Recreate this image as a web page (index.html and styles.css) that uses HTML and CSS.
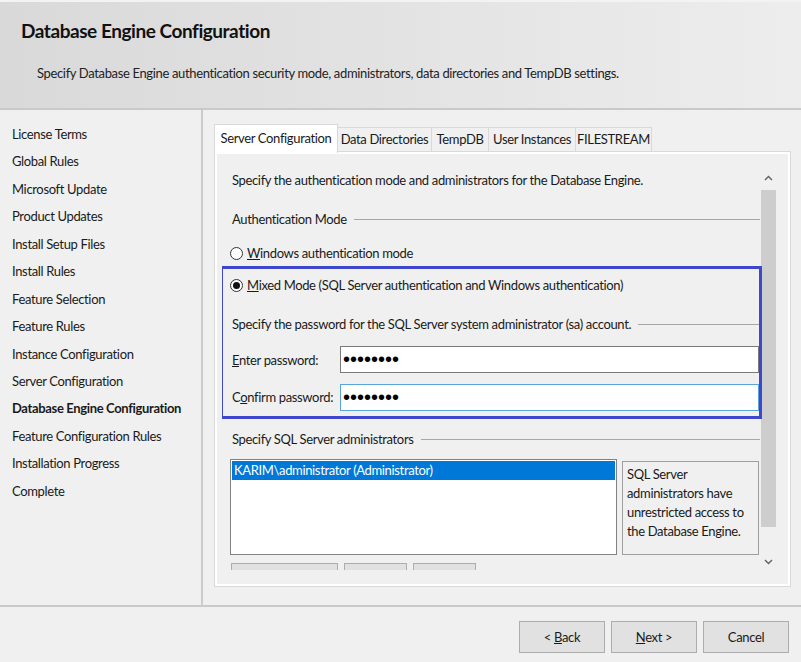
FILE: index.html
```html
<!DOCTYPE html>
<html lang="en">
<head>
<meta charset="utf-8">
<title>Database Engine Configuration</title>
<link rel="stylesheet" href="styles.css">
</head>
<body>
<div class="window">
  <header class="header">
    <h1 class="title">Database Engine Configuration</h1>
    <p class="subtitle">Specify Database Engine authentication security mode, administrators, data directories and TempDB settings.</p>
  </header>
  <div class="main">
    <nav class="nav">
      <div class="nav-item">License Terms</div>
      <div class="nav-item">Global Rules</div>
      <div class="nav-item">Microsoft Update</div>
      <div class="nav-item">Product Updates</div>
      <div class="nav-item">Install Setup Files</div>
      <div class="nav-item">Install Rules</div>
      <div class="nav-item">Feature Selection</div>
      <div class="nav-item">Feature Rules</div>
      <div class="nav-item">Instance Configuration</div>
      <div class="nav-item">Server Configuration</div>
      <div class="nav-item current">Database Engine Configuration</div>
      <div class="nav-item">Feature Configuration Rules</div>
      <div class="nav-item">Installation Progress</div>
      <div class="nav-item">Complete</div>
    </nav>
    <section class="content">
      <div class="tabs">
        <div class="tab active tab-server">Server Configuration</div>
        <div class="tab tab-data">Data Directories</div>
        <div class="tab tab-temp">TempDB</div>
        <div class="tab tab-user">User Instances</div>
        <div class="tab tab-fs">FILESTREAM</div>
      </div>
      <div class="panel">
        <div class="panel-inner">
          <div class="viewport">
            <div class="form">
              <div class="row intro">Specify the authentication mode and administrators for the Database Engine.</div>
              <div class="row group group-auth">Authentication Mode</div>
              <div class="row radio-row r1"><span class="radio"></span><span><u>W</u>indows authentication mode</span></div>
              <div class="row radio-row r2"><span class="radio checked"></span><span><u>M</u>ixed Mode (SQL Server authentication and Windows authentication)</span></div>
              <div class="row group group-pwd">Specify the password for the SQL Server system administrator (sa) account.</div>
              <div class="row field-row f1"><span class="field-label"><u>E</u>nter password:</span><span class="input">••••••••</span></div>
              <div class="row field-row f2"><span class="field-label">C<u>o</u>nfirm password:</span><span class="input focused">••••••••</span></div>
              <div class="row group group-admin">Specify SQL Server administrators</div>
              <div class="admins">
                <div class="listbox"><div class="list-item selected">KARIM\administrator (Administrator)</div></div>
                <div class="info">SQL Server<br>administrators have<br>unrestricted access to<br>the Database Engine.</div>
              </div>
              <div class="admin-buttons">
                <span class="mini-btn wide"></span>
                <span class="mini-btn"></span>
                <span class="mini-btn"></span>
              </div>
            </div>
            <div class="scrollbar">
              <div class="sb-btn up"><svg width="9" height="6" viewBox="0 0 9 6"><path d="M1 5 L4.5 1.5 L8 5" fill="none" stroke="#606060" stroke-width="1.4"/></svg></div>
              <div class="sb-track"><div class="sb-thumb"></div></div>
              <div class="sb-btn down"><svg width="9" height="6" viewBox="0 0 9 6"><path d="M1 1 L4.5 4.5 L8 1" fill="none" stroke="#606060" stroke-width="1.4"/></svg></div>
            </div>
            <div class="highlight"></div>
          </div>
        </div>
      </div>
    </section>
  </div>
  <footer class="footer">
    <button class="btn">&lt; <u>B</u>ack</button>
    <button class="btn"><u>N</u>ext &gt;</button>
    <button class="btn">Cancel</button>
  </footer>
</div>
</body>
</html>
```
FILE: styles.css
```css
* { box-sizing: border-box; }
html, body { margin: 0; padding: 0; }
body {
  background: #f0f0f0;
  font-family: Lato, "Liberation Sans", sans-serif;
  font-size: 13px;
  letter-spacing: -0.35px;
  color: #1a1a1a;
}
.window { width: 801px; height: 662px; overflow: hidden; display: flex; flex-direction: column; }

.header {
  height: 110px;
  border-top: 2px solid #f3f3f3;
  border-bottom: 2px solid #c9c9c9;
  background: linear-gradient(to right, #d9d9d9, #ededed);
  padding: 17px 0 0 21px;
}
.title { margin: 0; font-size: 19px; line-height: 24px; font-weight: bold; color: #111; letter-spacing: -0.45px; }
.subtitle { margin: 20px 0 0 16px; font-size: 13px; line-height: 20px; color: #222; }

.main { height: 497px; display: flex; border-bottom: 2px solid #c9c9c9; }
.nav { width: 203px; border-right: 2px solid #cbcbcb; padding: 11px 0 0 12px; }
.nav-item { height: 27.45px; line-height: 27.45px; white-space: nowrap; }
.nav-item.current { font-weight: bold; }

.content { flex: 1; padding: 14px 0 0 11px; }
.tabs { display: flex; align-items: flex-end; height: 27px; }
.tab {
  height: 24px; line-height: 22px;
  padding: 0;
  text-align: center;
  border: 1px solid #d9d9d9; border-left: none; border-bottom: none;
  background: #f0f0f0;
  white-space: nowrap;
}
.tab.active {
  height: 29px; line-height: 26px;
  margin-bottom: -2px;
  border-left: 1px solid #d9d9d9;
  background: #fff;
  position: relative; z-index: 1;
}
.tab-server { width: 124px; }
.tab-data { width: 94px; }
.tab-temp { width: 57px; }
.tab-user { width: 87px; }
.tab-fs { width: 76px; }
.panel { width: 577px; height: 436px; border: 1px solid #d9d9d9; }
.panel-inner { height: 100%; border: 2px solid #fff; background: #f0f0f0; padding: 11px 0 0 5px; }

.viewport { position: relative; display: flex; width: 555px; height: 405px; overflow: hidden; }
.form { width: 538px; padding-left: 8px; padding-right: 1px; }
.row { display: flex; align-items: center; height: 28px; white-space: nowrap; padding-left: 2px; }
.intro { height: 30px; }
.group::after { content: ""; flex: 1; height: 1px; background: #a7a7a7; margin-left: 7px; margin-right: -1px; }
.group-auth { margin-top: 10px; }
.radio-row { padding-left: 0; gap: 4px; }
.r1 { margin-top: 6px; }
.r2 { margin-top: 4px; }
.radio { width: 13px; height: 13px; border-radius: 50%; border: 1px solid #333; background: #fff; display: flex; align-items: center; justify-content: center; }
.radio.checked::after { content: ""; width: 7px; height: 7px; border-radius: 50%; background: #111; }
.group-pwd { margin-top: 11px; }
.field-label { width: 108px; }
.input {
  flex: 1; height: 27px; background: #fff; border: 1px solid #7a7a7a;
  font-family: "Liberation Sans", sans-serif; font-size: 20px; letter-spacing: 0px; line-height: 25px; padding-left: 2px; color: #000;
}
.input.focused { border-color: #5aa4dd; }
.f1 { margin-top: 8px; height: 27px; }
.f2 { margin-top: 10px; }
.group-admin { margin-top: 14px; }
.admins { display: flex; gap: 5px; margin-top: 6px; height: 96px; }
.listbox { width: 387px; border: 1px solid #828282; background: #fff; padding: 1px; }
.list-item { height: 19px; line-height: 19px; padding-left: 2px; }
.list-item.selected { background: #0078d7; color: #fff; }
.info { flex: 1; margin-top: 2px; border: 1px solid #a0a0a0; padding: 3px 4px; line-height: 19px; white-space: nowrap; }
.admin-buttons { display: flex; gap: 6px; margin-top: 8px; }
.mini-btn { width: 63px; height: 23px; background: #e1e1e1; border: 1px solid #adadad; }
.mini-btn.wide { width: 107px; margin-left: 1px; }

.scrollbar { width: 17px; display: flex; flex-direction: column; }
.sb-btn { height: 25px; display: flex; align-items: center; justify-content: center; }
.sb-btn.down { height: 17px; }
.sb-track { flex: 1; padding: 0 1px; }
.sb-thumb { height: 337px; background: #cdcdcd; }

.highlight {
  position: absolute; left: -2px; top: 101px; width: 542px; height: 153px;
  border: 3px solid #3e46cb;
  pointer-events: none;
}

.footer { flex: 1; display: flex; justify-content: flex-end; gap: 6px; padding: 14px 12px 0 0; }
.btn {
  width: 86px; height: 32px; background: #e1e1e1; border: 1px solid #adadad;
  font-family: inherit; font-size: 13px; letter-spacing: inherit; color: #1a1a1a; padding: 0;
}
```
